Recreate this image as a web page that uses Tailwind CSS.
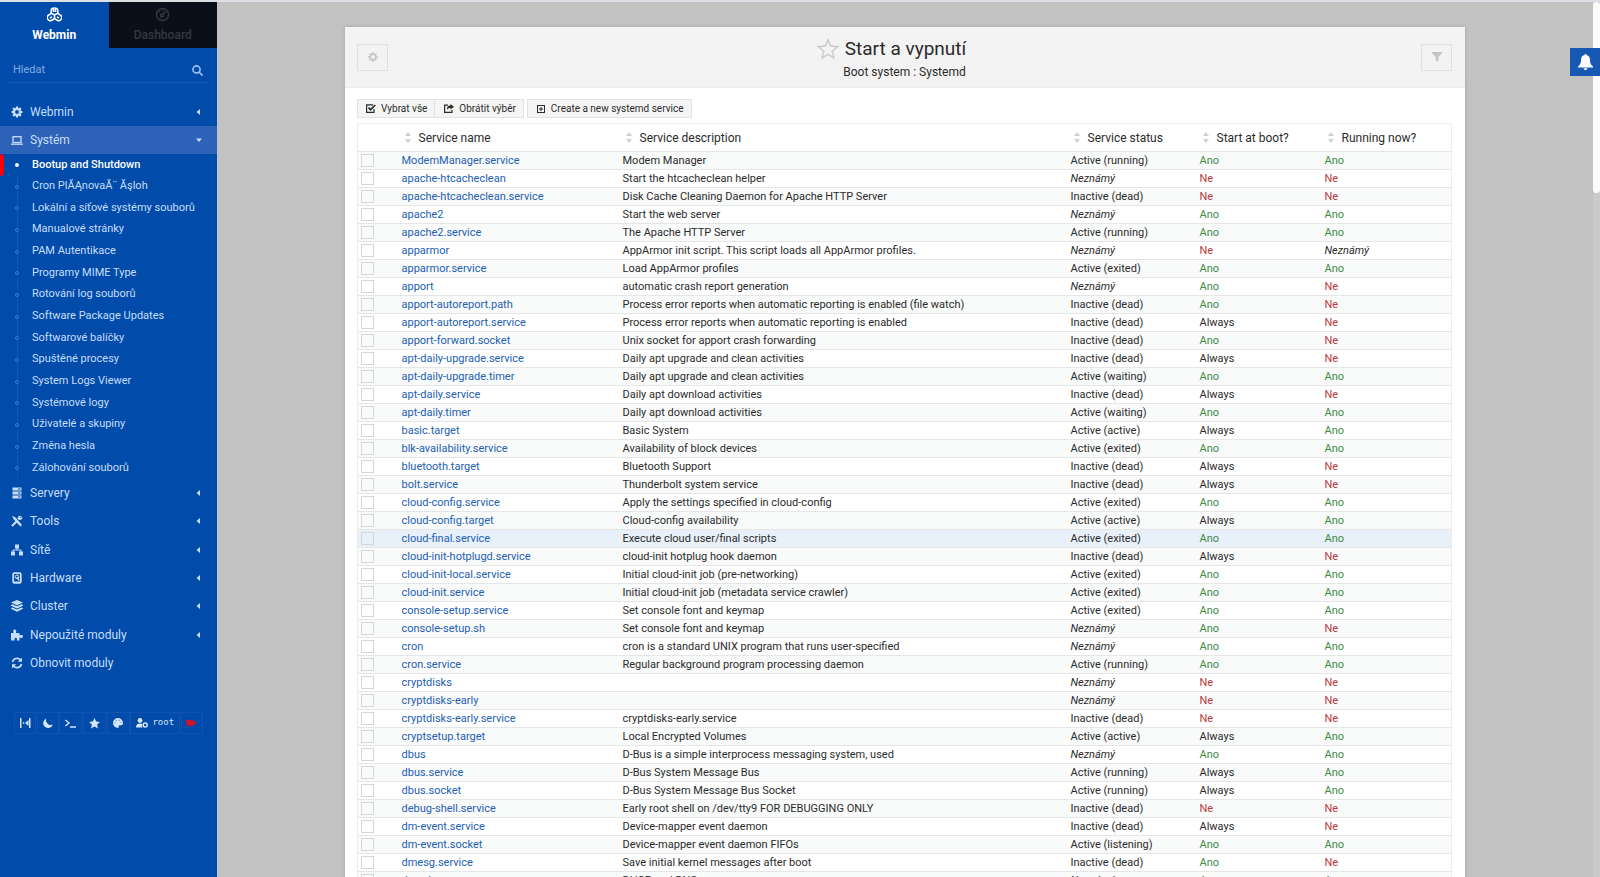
<!DOCTYPE html>
<html lang="cs">
<head>
<meta charset="utf-8">
<meta name="viewport" content="width=device-width, initial-scale=1">
<title>Start a vypnutí</title>
<script src="https://cdn.jsdelivr.net/npm/@tailwindcss/browser@4"></script>
</head>
<body class="h-screen overflow-hidden bg-[#c2c2c2] font-[Roboto,sans-serif] text-[#2b2b2b]">
<div class="flex h-screen flex-col border-t-2 border-[#dcdfe3]">
<div class="flex min-h-0 flex-1">

<aside class="flex w-[217px] shrink-0 flex-col bg-[#014bab] text-[#c7defa]">
  <div class="grid h-[46px] grid-cols-2 text-xs leading-4">
    <button class="flex flex-col items-center gap-[5px] pt-[5px] font-bold text-white">
      <svg class="size-[15px]" viewBox="0 0 15 15" fill="none" stroke="currentColor" stroke-width="1.600" stroke-linejoin="round"><path d="M4.200 6.400V3.400a3.300 2.400 0 0 1 6.600 0v3l2.400 1.600a2.900 2.900 0 0 1-3 5.200L7.500 11.600l-2.700 1.600A2.900 2.900 0 0 1 1.800 8zM7.500 8v3.600M4.600 6.400l2.900 1.600 2.900-1.600M6.500 2v3M8.500 2v3M3 11l2-1.100M12 11l-2-1.100"/></svg>
      Webmin
    </button>
    <button class="flex flex-col items-center gap-[5px] bg-[#0a0f1a] pt-[5px] font-medium text-[#34393f]">
      <svg class="size-[15px]" viewBox="0 0 15 15" fill="none" stroke="currentColor" stroke-width="1.500"><circle cx="7.500" cy="7.500" r="6"/><circle cx="7" cy="8.500" r="1.500"/><path d="M8 7.500l3-3.500M4 5.500l1-1M7 3.500h1"/></svg>
      Dashboard
    </button>
  </div>
  <div class="mx-2 mt-[11px] flex h-6 items-center border-b border-[#1558b4] pr-[6px] pl-[5px]">
    <input type="text" aria-label="Hledat" placeholder="Hledat" class="min-w-0 flex-1 bg-transparent text-[11px] outline-none placeholder:text-[#7fabe2]">
    <svg class="size-[11px]" viewBox="0 0 11 11" fill="none" stroke="#9cc4f5" stroke-width="1.600"><circle cx="4.500" cy="4.500" r="3.600"/><path d="M7.200 7.200l3.300 3.300"/></svg>
  </div>
  <nav class="mt-[15px] text-xs">
    <a href="#" class="flex h-7 items-center gap-[7px] pr-[17px] pl-[11px]">
      <svg class="size-3" viewBox="0 0 12 12"><circle cx="6" cy="6" r="3" fill="none" stroke="currentColor" stroke-width="2.600"/><path d="M6 .500v11M.500 6h11M2.100 2.100l7.800 7.800M9.900 2.100l-7.800 7.800" stroke="currentColor" stroke-width="2.200"/><circle cx="6" cy="6" r="1.900" fill="#014bab"/></svg>
      <span class="flex-1">Webmin</span>
      <svg class="h-[6px] w-1" viewBox="0 0 4 6" fill="currentColor"><path d="M4 0v6L0.500 3z"/></svg>
    </a>
    <a href="#" class="flex h-7 items-center gap-[7px] bg-[#2c62b7] pr-[15px] pl-[11px]">
      <svg class="h-[9px] w-3" viewBox="0 0 12 9" fill="none" stroke="currentColor" stroke-width="1.300"><rect x="2" y="0.700" width="8" height="5.800"/><path d="M0 8.200h12"/></svg>
      <span class="flex-1">Systém</span>
      <svg class="h-1 w-[6px]" viewBox="0 0 6 4" fill="currentColor"><path d="M0 0.500h6L3 4z"/></svg>
    </a>
    <div id="submenu" class="grid h-[325px] auto-rows-fr text-[11px]"></div>
    <div id="groups" class="grid h-[198px] auto-rows-fr"></div>
  </nav>
  <div class="mx-[14px] mt-[35px] flex h-[22px] items-stretch justify-between text-[#d6e6fb]">
    <button aria-label="Rozbalit" class="grid w-[22px] place-items-center border border-[#1353b0]"><svg class="h-[10px] w-[11px]" viewBox="0 0 11 10" fill="currentColor"><path d="M0 0h1.500v10H0zM9 0h1.500v10H9zM2.800 4.300h1.500v1.500H2.800zM8.500 2v6L5 5z"/></svg></button>
    <button aria-label="Noční režim" class="grid w-[22px] place-items-center border border-[#1353b0]"><svg class="size-[10px]" viewBox="0 0 10 10" fill="currentColor"><path d="M3.200.600A4.900 4.900 0 1 0 9.800 6.600C6 8 2.200 4.600 3.200.600z"/></svg></button>
    <button aria-label="Terminál" class="grid w-[23px] place-items-center border border-[#1353b0]"><svg class="h-[9px] w-[11px]" viewBox="0 0 11 9" fill="none" stroke="currentColor" stroke-width="1.400"><path d="M0.500 1l3.500 3L0.500 7M5 8h6"/></svg></button>
    <button aria-label="Oblíbené" class="grid w-[23px] place-items-center border border-[#1353b0]"><svg class="size-[11px]" viewBox="0 0 11 11" fill="currentColor"><path d="M5.500 0l1.600 3.600 3.900.400-2.900 2.600.900 3.900-3.500-2-3.500 2 .900-3.900L0 4l3.900-.400z"/></svg></button>
    <button aria-label="Motiv" class="grid w-[23px] place-items-center border border-[#1353b0]"><svg class="size-[10px]" viewBox="0 0 10 10"><path fill="currentColor" d="M5 0a5 5 0 1 0 0 10c1.300 0 .200-1.500.800-2.300.700-.900 4.200.500 4.200-2.700A5 5 0 0 0 5 0z"/><g fill="#6c9cdc"><circle cx="2.200" cy="5" r=".7"/><circle cx="3.500" cy="2.500" r=".7"/><circle cx="6.300" cy="2.300" r=".7"/><circle cx="8" cy="4.300" r=".7"/></g></svg></button>
    <button class="flex w-[50px] items-center justify-center gap-1 border border-[#1353b0] font-['DejaVu_Sans_Mono',monospace] text-[9px]"><svg class="h-[10px] w-3" viewBox="0 0 12 10" fill="currentColor"><circle cx="4" cy="2.500" r="2.400"/><path d="M0 9.500C0 6.500 1.800 5.600 4 5.600c1 0 1.800.200 2.300.600A3 3 0 0 0 6.500 9.500z"/><circle cx="9.200" cy="7" r="2" fill="none" stroke="currentColor" stroke-width="1.500"/></svg>root</button>
    <button aria-label="Odhlásit" class="grid w-[22px] place-items-center border border-[#1353b0]"><svg class="h-2 w-[11px]" viewBox="0 0 11 8" fill="#c8142f"><path d="M0 1h5V0l6 4-6 4V7H2L0 5z"/></svg></button>
  </div>
</aside>

<main class="min-w-0 flex-1 overflow-hidden px-32 pt-[25px]">
  <section class="bg-white shadow-[0_0_4px_rgba(0,0,0,0.15)]">
    <header class="flex h-[61px] items-center justify-between border-b border-[#ededed] bg-[#f3f3f3] pr-[13px] pl-3">
      <button aria-label="Nastavení" class="grid h-[27px] w-[31px] place-items-center border border-[#e0e0e0]"><svg class="size-[10px]" viewBox="0 0 12 12"><path d="M6 0v12M0 6h12M1.800 1.800l8.400 8.400M10.200 1.800l-8.400 8.400" stroke="#c6c6c6" stroke-width="2"/><circle cx="6" cy="6" r="3.300" fill="#f3f3f3" stroke="#c6c6c6" stroke-width="2"/></svg></button>
      <div class="flex flex-col items-center pt-[5px]">
        <h1 class="-ml-[26px] flex items-center gap-[6px] text-[19px] leading-6"><svg class="size-[22px]" viewBox="0 0 22 22" fill="none" stroke="#cccccc" stroke-width="1.500"><path d="M11 1.800l2.700 6.300 6.800.600-5.200 4.500 1.600 6.700L11 16.400l-5.900 3.500 1.600-6.700L1.500 8.700l6.800-.600z"/></svg>Start a vypnutí</h1>
        <p class="mt-px text-xs leading-5">Boot system : Systemd</p>
      </div>
      <button aria-label="Filtr" class="grid h-[27px] w-[31px] place-items-center border border-[#e0e0e0]"><svg class="size-[10px]" viewBox="0 0 10 10" fill="#c4c4c4"><path d="M0 0h10v1.200L6.300 5v5L3.700 8V5L0 1.200z"/></svg></button>
    </header>
    <div class="pt-[11px] pr-[13px] pl-3">
      <div class="flex h-[19px] text-[10px]">
        <button class="flex items-center gap-[5px] border border-[#e3e3e3] bg-[#f5f5f5] pr-[7px] pl-2"><svg class="h-[9px] w-[10px]" viewBox="0 0 10 9" fill="none" stroke="currentColor" stroke-width="1.200"><path d="M8 5v3.400H.600V.900H7"/><path stroke-width="1.700" d="M2.500 3.700l2 2L9.300 1"/></svg>Vybrat vše</button>
        <button class="-ml-px flex items-center gap-[5px] border border-[#e3e3e3] bg-[#f5f5f5] pr-[7px] pl-[9px]"><svg class="h-[9px] w-[10px]" viewBox="0 0 10 9"><path fill="none" stroke="currentColor" stroke-width="1.200" d="M4 1.100H.600v7.300H8V6"/><path fill="currentColor" d="M6.500 0L10 2.800 6.500 5.500V4C4.500 4 3.500 4.500 3 6c-.400-3 1-4.300 3.500-4.400z"/></svg>Obrátit výběr</button>
        <button class="ml-[3px] flex items-center gap-[6px] border border-[#e3e3e3] bg-[#f5f5f5] pr-2 pl-[9px]"><svg class="size-2" viewBox="0 0 8 8" fill="none" stroke="currentColor"><rect x=".500" y=".500" width="7" height="7"/><path d="M4 2v4M2 4h4"/></svg>Create a new systemd service</button>
      </div>
      <table class="mt-[5px] w-full table-fixed border-collapse border border-[#ededed] text-[11px]">
        <colgroup><col class="w-10"><col class="w-[221px]"><col><col class="w-[129px]"><col class="w-[125px]"><col class="w-[131px]"></colgroup>
        <thead id="head" class="text-xs"></thead>
        <tbody id="rows"></tbody>
      </table>
    </div>
  </section>
</main>

<div class="w-[7px] shrink-0 bg-[#cbcbcb]"><div class="h-[191px] rounded-full bg-[#fcfcfc]"></div></div>
</div>
</div>

<button aria-label="Oznámení" class="absolute top-[48px] right-0 grid h-7 w-[30px] place-items-center bg-[#1758b3]"><svg class="h-4 w-[15px]" viewBox="0 0 15 16" fill="#fff"><path d="M7.500 0c.700 0 1 .400 1 1.100C11 1.700 12 3.500 12 6c0 3.600 1 5 3 6.500v1H0v-1C2 11 3 9.600 3 6c0-2.500 1-4.300 3.500-4.900 0-.700.300-1.100 1-1.100zM5.500 14.200h4a2 1.800 0 0 1-4 0z"/></svg></button>

<script>
const sub = ["Bootup and Shutdown","Cron PlĂĄnovaĂ¨ Ăşloh","Lokální a síťové systémy souborů","Manualové stránky","PAM Autentikace","Programy MIME Type","Rotování log souborů","Software Package Updates","Softwarové balíčky","Spuštěné procesy","System Logs Viewer","Systémové logy","Uživatelé a skupiny","Změna hesla","Zálohování souborů"];
document.getElementById("submenu").innerHTML = sub.map((t, i) => i === 0
  ? `<a href="#" class="flex items-center whitespace-nowrap font-medium text-white"><span class="h-full w-1 rounded-r-sm bg-[#fb0007]"></span><span class="ml-[11px] size-1 rounded-full bg-white"></span><span class="ml-[13px]">${t}</span></a>`
  : `<a href="#" class="flex items-center whitespace-nowrap"><span class="ml-[15px] flex h-full w-1 flex-col items-center"><span class="w-px flex-1 bg-[#1555b2]"></span><span class="size-1 rounded-full border border-[#3b7ccd]"></span><span class="w-px flex-1 bg-[#1555b2]"></span></span><span class="ml-[13px]">${t}</span></a>`).join("");

const groups = [
  ["Servery", '<path d="M1.500.500h9v3h-9zM1.500 4.500h9v3h-9zM1.500 8.500h9v3h-9z" fill="currentColor"/><path d="M7 2h2.500M7 6h2.500M7 10h2.500" stroke="#014bab"/>'],
  ["Tools", '<path d="M1 1l3 1 4.500 5 2.500 3-1.500 1.500-3-3L2.500 4z" fill="currentColor"/><path d="M1 11l5.500-5.500" stroke="currentColor" stroke-width="2.200"/><path d="M10.500 1L9 2.500V3h.500L11 1.500c1 2-.500 4-3 3.500L6.500 3.700C6.500 1.500 8.500.300 10.500 1z" fill="currentColor"/>'],
  ["Sítě", '<path d="M4 .500h4v4H4zM0 7.500h4v4H0zM8 7.500h4v4H8z" fill="currentColor"/><path d="M6 4v2M2 8V6h8v2" fill="none" stroke="currentColor"/>'],
  ["Hardware", '<rect x="2.200" y="1.200" width="7.600" height="9.600" rx="1" fill="none" stroke="currentColor" stroke-width="1.800"/><circle cx="6" cy="4.800" r="1.800" fill="none" stroke="currentColor"/><path d="M6 5l2 3.500" stroke="currentColor" stroke-width="1.500"/><path d="M2.500 9.500h7v1.500h-7z" fill="currentColor"/>'],
  ["Cluster", '<path d="M6 0l6 2.600L6 5.200 0 2.600zM0 5l1.500-.700L6 6.300l4.500-2L12 5v.800L6 8.500 0 5.800zM0 8.300l1.500-.700L6 9.600l4.500-2 1.500.700v.500L6 11.800 0 8.800z" fill="currentColor"/>'],
  ["Nepoužité moduly", '<path d="M0 4h2.500C2 2.500 2 .500 3.700.500S5.500 2.500 5 4h3.500v2.500c1.200-.500 3.500-.800 3.500 1S9.700 9 8.500 8.500v3H5.800c.400-1.500.200-2.800-1-2.800s-1.500 1.300-1 2.800H0z" fill="currentColor"/>'],
  ["Obnovit moduly", '<path d="M1.500 5A4.600 4.600 0 0 1 9.500 3M10.500 7a4.600 4.600 0 0 1-8 2" fill="none" stroke="currentColor" stroke-width="1.700"/><path d="M11 .500v4.300H6.800zM1 11.500V7.200h4.200z" fill="currentColor"/>']
];
document.getElementById("groups").innerHTML = groups.map(([t, g], i) =>
  `<a href="#" class="flex items-center gap-[7px] pr-[17px] pl-[11px]"><svg class="size-3" viewBox="0 0 12 12">${g}</svg><span class="flex-1">${t}</span>${i < 6 ? '<svg class="h-[6px] w-1" viewBox="0 0 4 6" fill="currentColor"><path d="M4 0v6L0.500 3z"/></svg>' : ''}</a>`).join("");

document.getElementById("head").innerHTML = '<tr class="h-7"><td></td>' + ["Service name","Service description","Service status","Start at boot?","Running now?"].map(t =>
  `<th scope="col" class="p-0 pl-[7px] text-left font-normal"><span class="flex items-center gap-2"><svg class="h-[11px] w-[6px]" viewBox="0 0 6 11" fill="#cfcfcf"><path d="M3 0l3 4H0zM3 11L0 7h6z"/></svg>${t}</span></th>`).join("") + "</tr>";

const AR = "Active (running)", AE = "Active (exited)", AW = "Active (waiting)", AA = "Active (active)", D = "Inactive (dead)", N = "Neznámý";
const rows = [
["ModemManager.service","Modem Manager",AR,"Ano","Ano"],
["apache-htcacheclean","Start the htcacheclean helper",N,"Ne","Ne"],
["apache-htcacheclean.service","Disk Cache Cleaning Daemon for Apache HTTP Server",D,"Ne","Ne"],
["apache2","Start the web server",N,"Ano","Ano"],
["apache2.service","The Apache HTTP Server",AR,"Ano","Ano"],
["apparmor","AppArmor init script. This script loads all AppArmor profiles.",N,"Ne",N],
["apparmor.service","Load AppArmor profiles",AE,"Ano","Ano"],
["apport","automatic crash report generation",N,"Ano","Ne"],
["apport-autoreport.path","Process error reports when automatic reporting is enabled (file watch)",D,"Ano","Ne"],
["apport-autoreport.service","Process error reports when automatic reporting is enabled",D,"Always","Ne"],
["apport-forward.socket","Unix socket for apport crash forwarding",D,"Ano","Ne"],
["apt-daily-upgrade.service","Daily apt upgrade and clean activities",D,"Always","Ne"],
["apt-daily-upgrade.timer","Daily apt upgrade and clean activities",AW,"Ano","Ano"],
["apt-daily.service","Daily apt download activities",D,"Always","Ne"],
["apt-daily.timer","Daily apt download activities",AW,"Ano","Ano"],
["basic.target","Basic System",AA,"Always","Ano"],
["blk-availability.service","Availability of block devices",AE,"Ano","Ano"],
["bluetooth.target","Bluetooth Support",D,"Always","Ne"],
["bolt.service","Thunderbolt system service",D,"Always","Ne"],
["cloud-config.service","Apply the settings specified in cloud-config",AE,"Ano","Ano"],
["cloud-config.target","Cloud-config availability",AA,"Always","Ano"],
["cloud-final.service","Execute cloud user/final scripts",AE,"Ano","Ano"],
["cloud-init-hotplugd.service","cloud-init hotplug hook daemon",D,"Always","Ne"],
["cloud-init-local.service","Initial cloud-init job (pre-networking)",AE,"Ano","Ano"],
["cloud-init.service","Initial cloud-init job (metadata service crawler)",AE,"Ano","Ano"],
["console-setup.service","Set console font and keymap",AE,"Ano","Ano"],
["console-setup.sh","Set console font and keymap",N,"Ano","Ne"],
["cron","cron is a standard UNIX program that runs user-specified",N,"Ano","Ano"],
["cron.service","Regular background program processing daemon",AR,"Ano","Ano"],
["cryptdisks","",N,"Ne","Ne"],
["cryptdisks-early","",N,"Ne","Ne"],
["cryptdisks-early.service","cryptdisks-early.service",D,"Ne","Ne"],
["cryptsetup.target","Local Encrypted Volumes",AA,"Always","Ano"],
["dbus","D-Bus is a simple interprocess messaging system, used",N,"Ano","Ano"],
["dbus.service","D-Bus System Message Bus",AR,"Always","Ano"],
["dbus.socket","D-Bus System Message Bus Socket",AR,"Always","Ano"],
["debug-shell.service","Early root shell on /dev/tty9 FOR DEBUGGING ONLY",D,"Ne","Ne"],
["dm-event.service","Device-mapper event daemon",D,"Always","Ne"],
["dm-event.socket","Device-mapper event daemon FIFOs","Active (listening)","Ano","Ano"],
["dmesg.service","Save initial kernel messages after boot",D,"Ano","Ne"],
["dns-clean","DHCP and DNS",N,"Ano","Ano"]
];
const tone = { Ano: "text-[#3f8a43]", Ne: "text-[#bb3b3b]", [N]: "italic" };
document.getElementById("rows").innerHTML = rows.map((r, i) =>
  `<tr class="h-[18px] border-t border-[#e6e6e6] ${i === 21 ? 'bg-[#e8f0f9]' : i % 2 ? 'bg-white' : 'bg-[#f9fafa]'}"><td class="p-0 pl-[3px]"><input type="checkbox" aria-label="${r[0]}" class="block size-[13px] appearance-none border border-[#d6d6d6]"></td><td class="p-0 pl-1 leading-4"><a href="#" class="text-[#2260b4]">${r[0]}</a></td>` +
  r.slice(1).map(c => `<td class="whitespace-nowrap p-0 pl-1 leading-4 ${tone[c] || ''}">${c}</td>`).join("") + "</tr>").join("");
</script>
</body>
</html>
